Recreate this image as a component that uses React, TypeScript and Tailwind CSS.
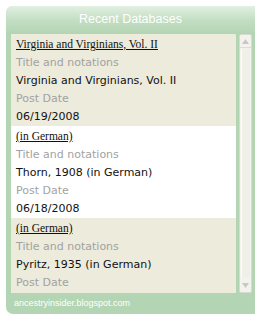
const ROWS = [
  { link: 'Virginia and Virginians, Vol. II', title: 'Virginia and Virginians, Vol. II', date: '06/19/2008' },
  { link: '(in German)', title: 'Thorn, 1908 (in German)', date: '06/18/2008' },
  { link: '(in German)', title: 'Pyritz, 1935 (in German)', date: '06/18/2008' },
]

function Scrollbar() {
  return (
    <div className="w-[13px] h-full flex flex-col rounded-[2px] border border-[#dad9cf] bg-[#f3f2ec]">
      <div className="h-[13px] flex items-center justify-center border-b border-[#dedcd2]">
        <svg width="7" height="5" viewBox="0 0 7 5">
          <path d="M3.5 0 L7 5 L0 5 Z" fill="#c8c8c4" />
        </svg>
      </div>
      <div className="flex-1 mx-[1px] my-[1px] rounded-[2px] bg-[#f0efe8] border-l border-[#fbfbf8]" />
      <div className="h-[13px] flex items-center justify-center">
        <svg width="7" height="5" viewBox="0 0 7 5">
          <path d="M0 0 L7 0 L3.5 5 Z" fill="#c8c8c4" />
        </svg>
      </div>
    </div>
  )
}

export default function App() {
  return (
    <div className="w-[260px] h-[319px] bg-white pt-[6px] pl-[6px] pr-[5px] pb-[5px]">
      <div className="h-full flex flex-col rounded-tl-[7px] rounded-bl-[7px] rounded-tr-[2px] bg-[#b3d5b3] overflow-hidden">
        {/* Header */}
        <div className="h-[28px] shrink-0 flex items-center justify-center bg-gradient-to-b from-[#e2f0e2] via-[#c3dec3] to-[#b3d5b3]">
          <span className="text-white text-[12.5px] font-['Liberation_Sans',sans-serif] pb-[2px]">Recent Databases</span>
        </div>

        {/* Body */}
        <div className="h-[259px] shrink-0 flex pl-[5px] pr-[3px] gap-[3px]">
          <div className="w-[225px] h-full overflow-hidden">
            {ROWS.map((row, i) => (
              <div key={i} className={i % 2 === 0 ? 'bg-[#ecebdc] pl-[5px]' : 'bg-white pl-[5px]'}>
                <div className="h-[20px] leading-[20px] text-[11.5px] text-[#111] underline font-['Liberation_Serif',serif]">
                  {row.link}
                </div>
                <div className="h-[18px] leading-[18px] text-[11px] text-[#a2a2a2] font-['DejaVu_Sans',sans-serif]">
                  Title and notations
                </div>
                <div className="h-[18px] leading-[18px] text-[11px] text-[#111] font-['DejaVu_Sans',sans-serif]">
                  {row.title}
                </div>
                <div className="h-[18px] leading-[18px] text-[11px] text-[#a2a2a2] font-['DejaVu_Sans',sans-serif]">
                  Post Date
                </div>
                <div className="h-[18px] leading-[18px] text-[11px] text-[#111] font-['DejaVu_Sans',sans-serif]">
                  {row.date}
                </div>
              </div>
            ))}
          </div>
          <Scrollbar />
        </div>

        {/* Footer */}
        <div className="flex-1 flex items-center pl-[8px]">
          <span className="text-white text-[9px] font-['Liberation_Sans',sans-serif]">ancestryinsider.blogspot.com</span>
        </div>
      </div>
    </div>
  )
}
